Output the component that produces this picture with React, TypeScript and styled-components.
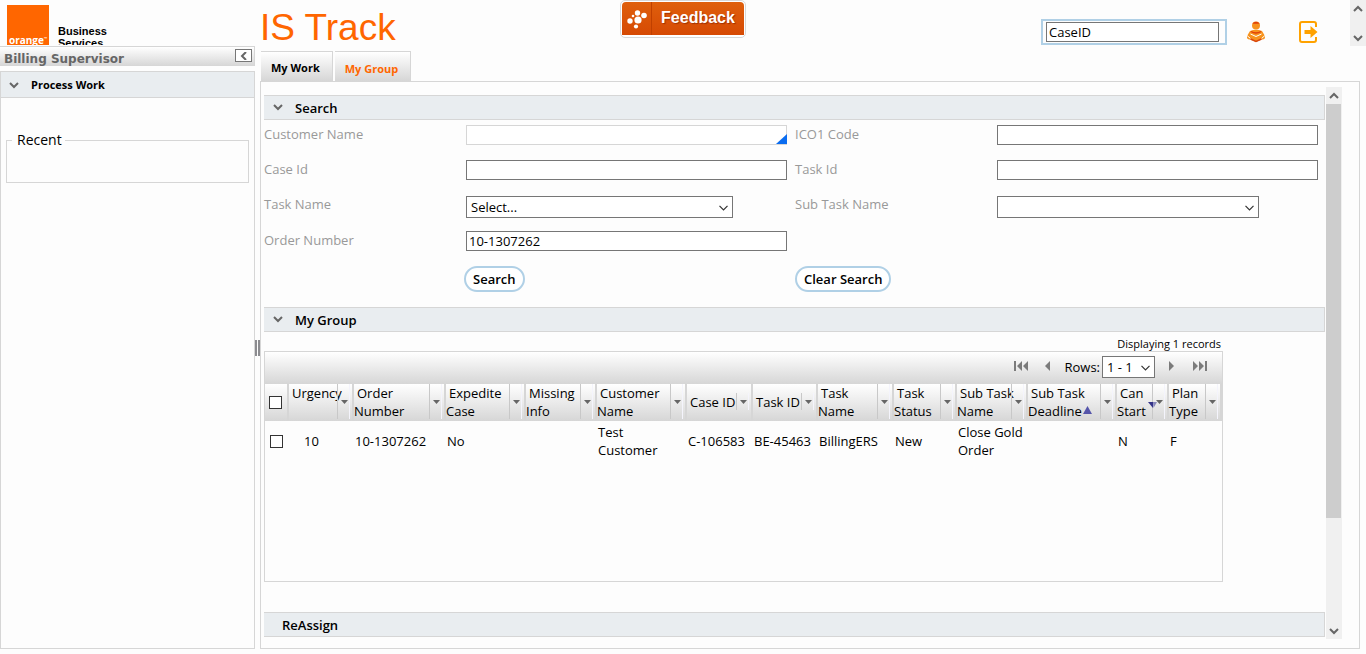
import React from "react";
import styled, { createGlobalStyle } from "styled-components";

const line = "#d6d6d6";
const orange = "#ff6600";
const headBg = "#e9edf0";
const pale = "#b0d0e6";
const barGradient = "linear-gradient(#ffffff, #d6d6d6)";

const GlobalStyle = createGlobalStyle`
  *, *::before, *::after { box-sizing: border-box; }
  body {
    margin: 0;
    background: #fdfdfd;
    color: #000;
    font-family: "Open Sans", "Noto Sans", sans-serif;
    font-size: 13px;
    line-height: 18px;
  }
  button, input, select { font: inherit; color: inherit; margin: 0; }
  h1, h2 { margin: 0; }
`;

const Page = styled.div`
  min-height: 100vh;
  display: flex;
  flex-direction: column;
`;

/* ---------- header ---------- */

const Header = styled.header`
  display: grid;
  grid-template-columns: 1fr auto 1fr;
  height: 46px;
`;

const HeaderStart = styled.div`
  display: flex;
`;

const Brand = styled.div`
  width: 260px;
  height: 45px;
  padding: 5px 0 0 7px;
  display: flex;
  gap: 9px;
  overflow: hidden;
  flex: none;
`;

const BrandSquare = styled.div`
  width: 42px;
  height: 40px;
  background: ${orange};
  color: #fff;
  display: flex;
  align-items: flex-end;
  justify-content: center;
  font: bold 10px/10px "Open Sans", sans-serif;
`;

const BrandMark = styled.sup`
  font-size: 4px;
  line-height: 4px;
  align-self: flex-end;
  padding-bottom: 4px;
`;

const BrandName = styled.div`
  padding-top: 20px;
  font: bold 11px/12px "Liberation Sans", Arial, sans-serif;
`;

const Title = styled.h1`
  color: ${orange};
  font: 37px/56px "Liberation Sans", Arial, sans-serif;
  white-space: nowrap;
`;

const FeedbackButton = styled.button`
  width: 126px;
  height: 38px;
  padding: 1px 1px 2px;
  display: flex;
  border: 1px solid #d8d8d8;
  border-radius: 5px;
  background: #fff;
  color: #fff;
  font: bold 16px/32px "Liberation Sans", Arial, sans-serif;
  text-shadow: 1px 1px 1px #a03000;
`;

const FeedbackFace = styled.span`
  flex: 1;
  height: 33px;
  display: flex;
  border-radius: 4px 4px 0 0;
  background: linear-gradient(#df5f0c, #d64a04);
`;

const FeedbackIcon = styled.span`
  width: 30px;
  border-right: 1px solid #c04000;
  display: flex;
  align-items: center;
  justify-content: center;
`;

const FeedbackText = styled.span`
  flex: 1;
  text-align: center;
`;

const HeaderEnd = styled.div`
  display: flex;
  justify-content: flex-end;
  align-items: flex-start;
`;

const CaseSearch = styled.label`
  width: 186px;
  height: 26px;
  margin-top: 19px;
  padding: 1px 6px 1px 3px;
  display: flex;
  border: 2px solid ${pale};
`;

const IconButton = styled.button`
  width: 22px;
  height: 24px;
  margin: 20px 0 0 18px;
  padding: 0;
  border: 0;
  background: none;
  display: flex;
  align-items: center;
  justify-content: center;

  & + & {
    margin-left: 30px;
  }
`;

const MiniScroll = styled.div`
  width: 16px;
  height: 46px;
  margin-left: 31px;
  background: #f0f0f0;
  display: flex;
  flex-direction: column;
  justify-content: space-between;
`;

/* ---------- form controls ---------- */

const TextInput = styled.input<{ $muted?: boolean }>`
  width: 100%;
  height: 20px;
  padding: 0 2px;
  border: 1px solid ${(p) => (p.$muted ? line : "#767676")};
  border-radius: 0;
  background: #fff;
`;

const SelectWrap = styled.span<{ $width: number }>`
  position: relative;
  display: flex;
  width: ${(p) => p.$width}px;
  height: 22px;

  svg {
    position: absolute;
    right: 5px;
    top: 9px;
    pointer-events: none;
  }
`;

const NativeSelect = styled.select`
  appearance: none;
  width: 100%;
  padding: 0 4px;
  border: 1px solid #767676;
  border-radius: 0;
  background: #fff;
`;

const Tick = styled.input`
  appearance: none;
  display: block;
  width: 13px;
  height: 13px;
  border: 1px solid #333;
  background: #fff;
`;

const TickSlot = styled.span`
  display: block;
  padding-left: 4px;
`;

/* ---------- body ---------- */

const Body = styled.div`
  display: flex;
  flex: none;
`;

const Side = styled.aside`
  width: 255px;
  flex: none;
  display: flex;
  flex-direction: column;
  gap: 5px;
`;

const RoleBar = styled.div`
  height: 20px;
  padding: 2px 2px 0 4px;
  display: flex;
  justify-content: space-between;
  border: solid ${line};
  border-width: 1px 1px 0 0;
  background: ${barGradient};
  color: #666;
  font: bold 12px/20px "DejaVu Sans", Verdana, sans-serif;
`;

const CollapseButton = styled.button`
  width: 17px;
  height: 13px;
  padding: 0;
  display: flex;
  align-items: center;
  justify-content: center;
  border: 1px solid #777;
  background: #fff;
`;

const SidePanel = styled.section`
  flex: 1;
  border: 1px solid ${line};
`;

const SideHead = styled.h2`
  height: 26px;
  padding-left: 8px;
  display: flex;
  align-items: center;
  gap: 12px;
  border-bottom: 1px solid ${line};
  background: ${headBg};
  font-size: 11px;
  font-weight: 700;
`;

const Recent = styled.fieldset`
  height: 52px;
  margin: 33px 5px 0;
  padding: 0 5px;
  border: 1px solid ${line};
`;

const RecentLegend = styled.legend`
  padding: 0 3px 0 5px;
  font-size: 14px;
  line-height: 18px;
`;

const Splitter = styled.div`
  width: 5px;
  flex: none;
  display: flex;
  align-items: center;
  gap: 1px;
`;

const SplitterBar = styled.span`
  width: 2px;
  height: 16px;
  background: #8c8c90;
`;

const Main = styled.main`
  flex: 1;
  min-width: 0;
  margin-right: 6px;
  padding-top: 5px;
`;

const Tabs = styled.nav`
  display: flex;
  gap: 2px;
  padding-left: 1px;
`;

const Tab = styled.button<{ $active?: boolean }>`
  height: 30px;
  padding: ${(p) => (p.$active ? "4px" : "2px")} 12px 0 10px;
  border: solid ${line};
  border-width: 1px 1px 0 0;
  background: ${barGradient};
  color: ${(p) => (p.$active ? orange : "#000")};
  font-size: 11px;
  font-weight: 700;
`;

const Panel = styled.div`
  display: flex;
  padding: 5px 17px 9px 3px;
  border: 1px solid ${line};
`;

const Content = styled.div`
  flex: 1;
  min-width: 0;
  padding: 8px 0 2px;
`;

const SectionHead = styled.h2<{ $plain?: boolean }>`
  height: 25px;
  margin-right: 1px;
  padding: 1px 0 0 ${(p) => (p.$plain ? 18 : 9)}px;
  display: flex;
  align-items: center;
  gap: 12px;
  border: solid ${line};
  border-width: 1px 1px 1px 0;
  background: ${headBg};
  font-size: 13px;
  font-weight: 600;

  svg {
    margin-bottom: 2px;
  }
`;

const Form = styled.form`
  display: grid;
  grid-template-columns: 202px 1fr 202px 1fr;
  align-items: center;
  row-gap: 15px;
  padding: 5px 0 15px;
`;

const FieldLabel = styled.label`
  align-self: start;
  color: #999;
`;

const Field = styled.div<{ $tall?: boolean }>`
  position: relative;
  margin: ${(p) => (p.$tall ? "1px 8px -2px 0" : "0 8px 0 0")};
`;

const Corner = styled.svg`
  position: absolute;
  right: 0;
  bottom: 1px;
`;

const Actions = styled.div`
  grid-column: 1 / -1;
  display: grid;
  grid-template-columns: 200px calc(50% - 200px) 1fr;
`;

const PillButton = styled.button`
  justify-self: start;
  height: 26px;
  padding: 0 7px;
  border: 2px solid ${pale};
  border-radius: 13px;
  background: #fff;
  font-weight: 600;

  &:first-child {
    grid-column: 2;
  }
`;

/* ---------- results ---------- */

const Results = styled.div`
  margin: 3px 103px 30px 0;
`;

const Count = styled.div`
  height: 16px;
  padding-right: 2px;
  text-align: right;
  font-size: 11px;
`;

const Grid = styled.div`
  min-height: 231px;
  border: 1px solid ${line};
`;

const Pager = styled.div`
  height: 32px;
  padding: 0 15px 2px 0;
  display: flex;
  justify-content: flex-end;
  align-items: center;
  background: ${barGradient};
`;

const PagerButton = styled.button<{ $before?: number; $after?: number }>`
  display: flex;
  padding: 0;
  margin: 0 ${(p) => p.$after ?? 0}px 3px ${(p) => p.$before ?? 0}px;
  border: 0;
  background: none;
`;

const RowsLabel = styled.label`
  display: flex;
  align-items: center;
  gap: 2px;
`;

const Table = styled.table`
  width: 100%;
  table-layout: fixed;
  border-collapse: separate;
  border-spacing: 0;
`;

const HeadCell = styled.th`
  height: 37px;
  padding: 0 0 1px;
  border-right: 2px solid ${line};
  background: ${barGradient};
  font-weight: 400;
  text-align: left;
  vertical-align: middle;
`;

const HeadInner = styled.div<{ $single?: boolean }>`
  height: ${(p) => (p.$single ? 18 : 36)}px;
  display: flex;
`;

const HeadText = styled.span`
  flex: 1;
  min-width: 0;
  white-space: pre;
  text-indent: 3px;
`;

const HeadMenu = styled.button`
  width: 15px;
  flex: none;
  margin: 0 0 1px;
  padding: 0;
  display: flex;
  align-items: center;
  border: 0;
  border-left: 1px solid #c8c8c8;
  background: none;

  &::after {
    content: "";
    align-self: stretch;
    width: 1px;
    margin-left: 1px;
    background: #f4f4fc;
  }

  svg {
    margin-left: 3px;
  }
`;

const Cell = styled.td<{ $inset?: number }>`
  height: 40px;
  padding: 0 3px 0 ${(p) => p.$inset ?? 1}px;
  vertical-align: middle;
`;

const SortMark = styled.svg`
  margin-left: 1px;
  vertical-align: 2px;
`;

const FilterSlot = styled.span`
  position: absolute;
  margin-left: 2px;
  text-indent: 0;
  line-height: 0;
`;

/* ---------- scrollbar ---------- */

const Scrollbar = styled.div`
  width: 16px;
  flex: none;
  display: flex;
  flex-direction: column;
  background: #f0f0f0;
`;

const ScrollArrow = styled.button`
  height: 17px;
  padding: 0;
  border: 0;
  background: none;
  display: flex;
  align-items: center;
  justify-content: center;
`;

const ScrollTrack = styled.div`
  flex: 1;
`;

const ScrollThumb = styled.div`
  width: 15px;
  height: 80%;
  background: #cdcdcd;
`;

/* ---------- drawings ---------- */

type Dir = "up" | "down" | "left";

const turns: Record<Dir, string> = {
  down: "M1 2 L5 6 L9 2",
  up: "M1 6 L5 2 L9 6",
  left: "M7 0 L3 4 L7 8",
};

const Chevron = ({ dir = "down", color = "#666" }: { dir?: Dir; color?: string }) => (
  <svg width="10" height="8" viewBox="0 0 10 8" fill="none" stroke={color} strokeWidth="2">
    <path d={turns[dir]} />
  </svg>
);

const SelectChevron = () => (
  <svg width="9" height="6" viewBox="0 0 9 6" fill="none" stroke="#333" strokeWidth="1.2">
    <path d="M0.5 0.8 L4.5 4.8 L8.5 0.8" />
  </svg>
);

const PagerGlyph = ({ d, width }: { d: string; width: number }) => (
  <svg width={width} height="12" viewBox={`0 0 ${width} 12`} fill="#7b7b7b">
    <path d={d} />
  </svg>
);

const Dots = () => (
  <svg width="20" height="20" viewBox="0 0 20 20" fill="#fff">
    <circle cx="3" cy="12" r="2.7" />
    <circle cx="11" cy="11" r="3.6" />
    <circle cx="10.5" cy="4" r="2.7" />
    <circle cx="17" cy="6.5" r="2.8" />
    <circle cx="9" cy="17.5" r="2.1" />
    <circle cx="6" cy="7" r="1.3" />
  </svg>
);

const ReaderIcon = () => (
  <svg width="20" height="22" viewBox="0 0 20 22">
    <circle cx="10" cy="4.5" r="4" fill="#f7931e" />
    <path d="M6.5 2.8 A4 4 0 0 1 13.5 2.8 Z" fill="#e0400a" />
    <path d="M4 10 Q10 7.5 16 10 L19 15 Q19.5 19 15.5 18.5 L10 21 L4.5 18.5 Q0.5 19 1 15 Z" fill="#f7931e" />
    <path d="M5 10.5 Q10 13.5 15 10.5" fill="none" stroke="#e0400a" strokeWidth="1.4" />
    <path d="M4.5 13 L10 15.5 L15.5 13 M1 14.5 L4.5 17.5 M19 14.5 L15.5 17.5" fill="none" stroke="#fff" strokeWidth="1" />
    <path d="M4.5 18 L10 20.5 L15.5 18" fill="none" stroke="#d9480f" strokeWidth="1.4" />
  </svg>
);

const ExitIcon = () => (
  <svg width="19" height="22" viewBox="0 0 19 22">
    <path d="M17 6 V3 Q17 1 15 1 H3 Q1 1 1 3 V19 Q1 21 3 21 H15 Q17 21 17 19 V16" fill="none" stroke="#ffa200" strokeWidth="2" />
    <path d="M5.5 9 H11.5 V5 L18.5 11 L11.5 17 V13 H5.5 Z" fill="#ffa200" />
  </svg>
);

const FilterMark = () => (
  <svg width="9" height="7" viewBox="0 0 9 7">
    <path d="M0 0 H5 V6 Z" fill="#333388" />
    <path d="M5 0 H9 L5.5 6 Z" fill="#8888bb" />
  </svg>
);

/* ---------- data ---------- */

type Column = { name: string; width: number; value: string; inset?: number; mark?: "sort" | "filter" };

const columns: Column[] = [
  { name: "Urgency\n", width: 65, value: "10", inset: 15 },
  { name: "Order\nNumber", width: 92, value: "10-1307262" },
  { name: "Expedite\nCase", width: 80, value: "No" },
  { name: "Missing\nInfo", width: 71, value: "" },
  { name: "Customer\nName", width: 90, value: "Test Customer" },
  { name: "Case ID", width: 66, value: "C-106583" },
  { name: "Task ID", width: 65, value: "BE-45463" },
  { name: "Task\nName", width: 76, value: "BillingERS" },
  { name: "Task\nStatus", width: 63, value: "New" },
  { name: "Sub Task\nName", width: 71, value: "Close Gold Order" },
  { name: "Sub Task\nDeadline", width: 89, value: "", mark: "sort" },
  { name: "Can\nStart", width: 52, value: "N", mark: "filter" },
  { name: "Plan\nType", width: 53, value: "F" },
];

const Select = ({ id, width, value }: { id: string; width: number; value: string }) => (
  <SelectWrap $width={width}>
    <NativeSelect id={id} defaultValue={value}>
      <option value={value}>{value}</option>
    </NativeSelect>
    <SelectChevron />
  </SelectWrap>
);

const ColumnHead = ({ column }: { column: Column }) => {
  const [first, second] = column.name.split("\n");
  return (
    <HeadCell scope="col">
      <HeadInner $single={second === undefined}>
        <HeadText>
          {column.name}
          {column.mark === "sort" && (
            <SortMark width="9" height="8" viewBox="0 0 9 8">
              <path d="M4.5 0 L9 8 H0 Z" fill="#5555aa" />
            </SortMark>
          )}
          {column.mark === "filter" && (
            <FilterSlot>
              <FilterMark />
            </FilterSlot>
          )}
        </HeadText>
        <HeadMenu type="button" aria-label={`${first} menu`}>
          <svg width="7" height="4" viewBox="0 0 7 4" fill="#666">
            <path d="M0 0 H7 L3.5 4 Z" />
          </svg>
        </HeadMenu>
      </HeadInner>
    </HeadCell>
  );
};

export default function App() {
  return (
    <Page>
      <GlobalStyle />
      <Header>
        <HeaderStart>
          <Brand>
            <BrandSquare>
              orange<BrandMark>™</BrandMark>
            </BrandSquare>
            <BrandName>
              Business
              <br />
              Services
            </BrandName>
          </Brand>
          <Title>IS Track</Title>
        </HeaderStart>
        <FeedbackButton type="button">
          <FeedbackFace>
            <FeedbackIcon>
              <Dots />
            </FeedbackIcon>
            <FeedbackText>Feedback</FeedbackText>
          </FeedbackFace>
        </FeedbackButton>
        <HeaderEnd>
          <CaseSearch>
            <TextInput aria-label="Case ID" defaultValue="CaseID" />
          </CaseSearch>
          <IconButton type="button" aria-label="Profile">
            <ReaderIcon />
          </IconButton>
          <IconButton type="button" aria-label="Log out">
            <ExitIcon />
          </IconButton>
          <MiniScroll>
            <ScrollArrow type="button" aria-label="Scroll header up">
              <Chevron dir="up" />
            </ScrollArrow>
            <ScrollArrow type="button" aria-label="Scroll header down">
              <Chevron />
            </ScrollArrow>
          </MiniScroll>
        </HeaderEnd>
      </Header>

      <Body>
        <Side>
          <RoleBar>
            Billing Supervisor
            <CollapseButton type="button" aria-label="Collapse">
              <Chevron dir="left" />
            </CollapseButton>
          </RoleBar>
          <SidePanel>
            <SideHead>
              <Chevron />
              Process Work
            </SideHead>
            <Recent>
              <RecentLegend>Recent</RecentLegend>
            </Recent>
          </SidePanel>
        </Side>

        <Splitter>
          <SplitterBar />
          <SplitterBar />
        </Splitter>

        <Main>
          <Tabs>
            <Tab type="button">My Work</Tab>
            <Tab type="button" $active>
              My Group
            </Tab>
          </Tabs>
          <Panel>
            <Content>
              <SectionHead>
                <Chevron />
                Search
              </SectionHead>
              <Form onSubmit={(e) => e.preventDefault()}>
                <FieldLabel htmlFor="customer">Customer Name</FieldLabel>
                <Field>
                  <TextInput id="customer" $muted />
                  <Corner width="11" height="10" viewBox="0 0 11 10">
                    <path d="M11 0 V10 H0 Z" fill="#0a6cf0" />
                  </Corner>
                </Field>
                <FieldLabel htmlFor="ico">ICO1 Code</FieldLabel>
                <Field>
                  <TextInput id="ico" />
                </Field>

                <FieldLabel htmlFor="case">Case Id</FieldLabel>
                <Field>
                  <TextInput id="case" />
                </Field>
                <FieldLabel htmlFor="task">Task Id</FieldLabel>
                <Field>
                  <TextInput id="task" />
                </Field>

                <FieldLabel htmlFor="taskName">Task Name</FieldLabel>
                <Field $tall>
                  <Select id="taskName" width={267} value="Select..." />
                </Field>
                <FieldLabel htmlFor="subTask">Sub Task Name</FieldLabel>
                <Field $tall>
                  <Select id="subTask" width={262} value="" />
                </Field>

                <FieldLabel htmlFor="order">Order Number</FieldLabel>
                <Field>
                  <TextInput id="order" defaultValue="10-1307262" />
                </Field>

                <Actions>
                  <PillButton type="submit">Search</PillButton>
                  <PillButton type="reset">Clear Search</PillButton>
                </Actions>
              </Form>

              <SectionHead>
                <Chevron />
                My Group
              </SectionHead>
              <Results>
                <Count>Displaying 1 records</Count>
                <Grid>
                  <Pager>
                    <PagerButton type="button" aria-label="First page" $after={17}>
                      <PagerGlyph width={14} d="M0 1 H2 V11 H0 Z M8 1 V11 L3 6 Z M14 1 V11 L9 6 Z" />
                    </PagerButton>
                    <PagerButton type="button" aria-label="Previous page" $after={14}>
                      <PagerGlyph width={5} d="M5 1 V11 L0 6 Z" />
                    </PagerButton>
                    <RowsLabel htmlFor="rows">
                      Rows:
                      <Select id="rows" width={53} value="1 - 1" />
                    </RowsLabel>
                    <PagerButton type="button" aria-label="Next page" $before={14} $after={19}>
                      <PagerGlyph width={5} d="M0 1 V11 L5 6 Z" />
                    </PagerButton>
                    <PagerButton type="button" aria-label="Last page">
                      <PagerGlyph width={14} d="M0 1 V11 L5 6 Z M6 1 V11 L11 6 Z M12 1 H14 V11 H12 Z" />
                    </PagerButton>
                  </Pager>
                  <Table>
                    <colgroup>
                      <col width={24} />
                      {columns.map((c) => (
                        <col key={c.name} width={c.width} />
                      ))}
                    </colgroup>
                    <thead>
                      <tr>
                        <HeadCell scope="col">
                          <TickSlot>
                            <Tick type="checkbox" aria-label="Select all rows" />
                          </TickSlot>
                        </HeadCell>
                        {columns.map((c) => (
                          <ColumnHead key={c.name} column={c} />
                        ))}
                      </tr>
                    </thead>
                    <tbody>
                      <tr>
                        <Cell $inset={5}>
                          <Tick type="checkbox" aria-label="Select order 10-1307262" />
                        </Cell>
                        {columns.map((c) => (
                          <Cell key={c.name} $inset={c.inset}>
                            {c.value}
                          </Cell>
                        ))}
                      </tr>
                    </tbody>
                  </Table>
                </Grid>
              </Results>

              <SectionHead $plain>ReAssign</SectionHead>
            </Content>
            <Scrollbar>
              <ScrollArrow type="button" aria-label="Scroll up">
                <Chevron dir="up" />
              </ScrollArrow>
              <ScrollTrack>
                <ScrollThumb />
              </ScrollTrack>
              <ScrollArrow type="button" aria-label="Scroll down">
                <Chevron />
              </ScrollArrow>
            </Scrollbar>
          </Panel>
        </Main>
      </Body>
    </Page>
  );
}
